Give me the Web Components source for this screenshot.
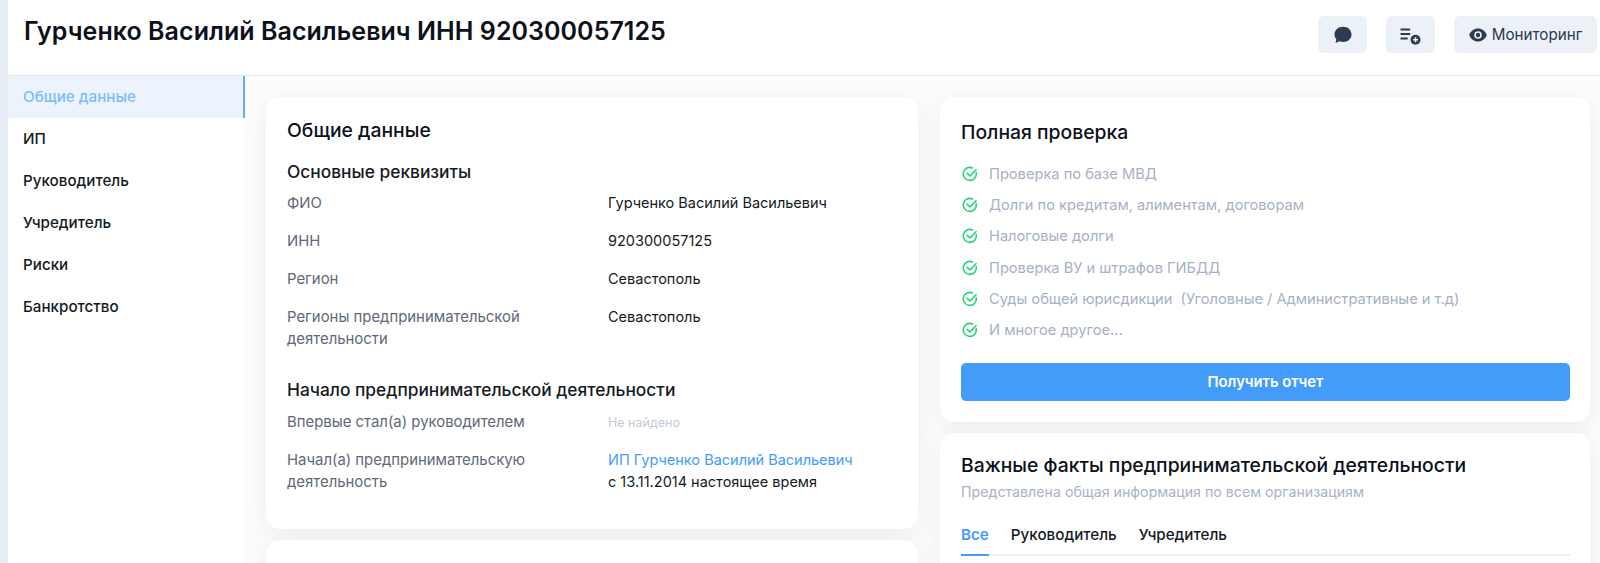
<!DOCTYPE html>
<html lang="ru">
<head>
<meta charset="utf-8">
<title>Гурченко Василий Васильевич</title>
<style>
  html, body { margin: 0; height: 100%; overflow: hidden; background: #e9eef6; }
  body { font-family: Inter, "Noto Sans", sans-serif; color: #0c111a; padding-left: 8px; box-sizing: border-box; }
</style>
</head>
<body>
<app-page>
  <page-header slot="header" title="Гурченко Василий Васильевич ИНН 920300057125"></page-header>
  <side-nav slot="nav">
    <nav-item active>Общие данные</nav-item>
    <nav-item>ИП</nav-item>
    <nav-item>Руководитель</nav-item>
    <nav-item>Учредитель</nav-item>
    <nav-item>Риски</nav-item>
    <nav-item>Банкротство</nav-item>
  </side-nav>

  <info-card slot="left" heading="Общие данные" style="height:432px;--h2-gap:17px">
    <info-section heading="Основные реквизиты">
      <info-row label="ФИО">Гурченко Василий Васильевич</info-row>
      <info-row label="ИНН">920300057125</info-row>
      <info-row label="Регион">Севастополь</info-row>
      <info-row label="Регионы предпринимательской деятельности">Севастополь</info-row>
    </info-section>
    <info-section heading="Начало предпринимательской деятельности" style="margin-top:28px;--h3-gap:9px;--row-gap:15px">
      <info-row label="Впервые стал(а) руководителем"><span style="color:#c3cad8;font-size:12.500px">Не найдено</span></info-row>
      <info-row label="Начал(а) предпринимательскую деятельность"><span style="color:#449cf9">ИП Гурченко Василий Васильевич</span><br>с 13.11.2014 настоящее время</info-row>
    </info-section>
  </info-card>
  <info-card slot="left" style="height:120px"></info-card>

  <info-card slot="right" heading="Полная проверка" style="height:325px" pad>
    <check-list>
      <check-item>Проверка по базе МВД</check-item>
      <check-item>Долги по кредитам, алиментам, договорам</check-item>
      <check-item>Налоговые долги</check-item>
      <check-item>Проверка ВУ и штрафов ГИБДД</check-item>
      <check-item>Суды общей юрисдикции&nbsp; (Уголовные / Административные и т.д)</check-item>
      <check-item>И многое другое...</check-item>
    </check-list>
    <primary-button>Получить отчет</primary-button>
  </info-card>
  <info-card slot="right" heading="Важные факты предпринимательской деятельности" style="height:200px;padding-top:19px;--h2-gap:4px" pad>
    <div style="color:#aab3c5;font-size:14.200px;line-height:20px">Представлена общая информация по всем организациям</div>
    <tab-bar>
      <tab-item active>Все</tab-item>
      <tab-item>Руководитель</tab-item>
      <tab-item>Учредитель</tab-item>
    </tab-bar>
  </info-card>
</app-page>

<script>
class AppPage extends HTMLElement {
  constructor() {
    super();
    this.attachShadow({ mode: 'open' }).innerHTML = `
      <style>
        :host { display: block; height: 563px; background: #fff; overflow: hidden; }
        .body { display: flex; height: 487px; }
        nav { width: 237px; flex: none; }
        main {
          flex: 1;
          min-width: 0;
          display: grid;
          grid-template-columns: 652px 650px;
          gap: 22px;
          padding: 21px 0 0 21px;
          background: #fcfcfd;
          align-content: start;
        }
        .col { display: flex; flex-direction: column; gap: 11px; }
      </style>
      <slot name="header"></slot>
      <div class="body">
        <nav><slot name="nav"></slot></nav>
        <main>
          <div class="col"><slot name="left"></slot></div>
          <div class="col"><slot name="right"></slot></div>
        </main>
      </div>
    `;
  }
}

class PageHeader extends HTMLElement {
  constructor() {
    super();
    this.attachShadow({ mode: 'open' }).innerHTML = `
      <style>
        :host {
          display: flex;
          justify-content: space-between;
          height: 75px;
          border-bottom: 1px solid #e3e5e9;
          background: #fff;
          padding: 0 3px 0 16px;
        }
        h1 { margin: 15px 0 0; font-size: 25px; line-height: 32px; font-weight: 600; letter-spacing: .05px; }
        .actions { display: flex; gap: 19px; padding-top: 16px; height: 37px; }
        button {
          display: flex;
          align-items: center;
          justify-content: center;
          gap: 5px;
          height: 37px;
          min-width: 49px;
          padding: 0;
          border: none;
          border-radius: 6px;
          background: #ecf0f7;
          color: #2c3a4d;
          font: 400 15.200px Inter, "Noto Sans", sans-serif;
        }
        button.wide { width: 143px; }
        svg { display: block; fill: #2d3b4e; }
      </style>
      <h1></h1>
      <div class="actions">
        <button aria-label="Чат">
          <svg width="20" height="20" viewBox="0 0 20 20"><path d="M10.200 1.800c-5 0-8.700 3.300-8.700 7.700 0 1.900.7 3.500 1.800 4.800l-.8 3.800 4-1.800c1.200.5 2.400.7 3.700.7 4.800 0 8.300-3.200 8.300-7.500s-3.500-7.700-8.300-7.700z"/></svg>
        </button>
        <button aria-label="Добавить в список">
          <svg width="22" height="20" viewBox="0 0 22 20"><path d="M.5 3.500h9.700v2H.5zM.5 8h9.700v2H.5zM.5 12.500h7.200v2H.5z"/><circle cx="15.500" cy="14.800" r="5"/><path d="M14.700 12.300h1.600V14H18v1.600h-1.700v1.700h-1.600v-1.700H13V14h1.700z" fill="#ecf0f7"/></svg>
        </button>
        <button class="wide">
          <svg width="18" height="14" viewBox="0 0 18 14"><path fill-rule="evenodd" d="M9 .5C5 .5 1.700 3 .2 7 1.700 11 5 13.500 9 13.500s7.300-2.500 8.800-6.500C16.300 3 13 .5 9 .5zM9 10.800a3.800 3.800 0 1 1 0-7.600 3.800 3.800 0 0 1 0 7.600z"/><circle cx="9" cy="7" r="2.200"/></svg>
          <span>Мониторинг</span>
        </button>
      </div>
    `;
  }
  connectedCallback() {
    this.shadowRoot.querySelector('h1').textContent = this.getAttribute('title');
    this.removeAttribute('title');
  }
}

class SideNav extends HTMLElement {
  constructor() {
    super();
    this.attachShadow({ mode: 'open' }).innerHTML = `
      <style>:host { display: block; }</style>
      <slot></slot>
    `;
  }
}

class NavItem extends HTMLElement {
  constructor() {
    super();
    this.attachShadow({ mode: 'open' }).innerHTML = `
      <style>
        :host {
          display: flex;
          align-items: center;
          height: 42px;
          padding: 0 0 2px 15px;
          box-sizing: border-box;
          font-size: 15.200px;
          font-weight: 500;
          color: #141a24;
        }
        :host([active]) {
          background: #ecf3fc;
          color: #7fbafb;
          border-right: 2px solid #6ca8f4;
        }
      </style>
      <slot></slot>
    `;
  }
}

class InfoCard extends HTMLElement {
  constructor() {
    super();
    this.attachShadow({ mode: 'open' }).innerHTML = `
      <style>
        :host {
          display: block;
          flex: none;
          box-sizing: border-box;
          background: #fff;
          border-radius: 14px;
          padding: 20px 21px;
          box-shadow: 0 6px 22px rgba(30, 45, 70, .07);
        }
        :host([pad]) { padding: 22px 20px 22px 21px; }
        h2 { margin: 0 0 var(--h2-gap, 8px); font-size: 19.350px; line-height: 26px; font-weight: 550; }
        h2:empty { display: none; }
      </style>
      <h2></h2>
      <slot></slot>
    `;
  }
  connectedCallback() {
    this.shadowRoot.querySelector('h2').textContent = this.getAttribute('heading') || '';
  }
}

class InfoSection extends HTMLElement {
  constructor() {
    super();
    this.attachShadow({ mode: 'open' }).innerHTML = `
      <style>
        :host { display: block; }
        h3 { margin: 0 0 var(--h3-gap, 8px); font-size: 17.350px; line-height: 24px; font-weight: 550; color: #141a24; }
        .rows { display: flex; flex-direction: column; gap: var(--row-gap, 16px); }
      </style>
      <h3></h3>
      <div class="rows"><slot></slot></div>
    `;
  }
  connectedCallback() {
    this.shadowRoot.querySelector('h3').textContent = this.getAttribute('heading');
  }
}

class InfoRow extends HTMLElement {
  constructor() {
    super();
    this.attachShadow({ mode: 'open' }).innerHTML = `
      <style>
        :host {
          display: grid;
          grid-template-columns: 321px 1fr;
          font-size: 14.900px;
          line-height: 22px;
        }
        .label { color: #5f6878; padding-right: 60px; }
        .value { color: #141a24; font-size: 14.500px; }
      </style>
      <div class="label"></div>
      <div class="value"><slot></slot></div>
    `;
  }
  connectedCallback() {
    this.shadowRoot.querySelector('.label').textContent = this.getAttribute('label');
  }
}

class CheckList extends HTMLElement {
  constructor() {
    super();
    this.attachShadow({ mode: 'open' }).innerHTML = `
      <style>:host { display: flex; flex-direction: column; gap: 9.200px; margin-top: 18px; }</style>
      <slot></slot>
    `;
  }
}

class CheckItem extends HTMLElement {
  constructor() {
    super();
    this.attachShadow({ mode: 'open' }).innerHTML = `
      <style>
        :host {
          display: flex;
          align-items: center;
          gap: 11px;
          height: 22px;
          font-size: 14.650px;
          color: #a7b1c4;
        }
        svg { flex: none; margin-left: 1px; fill: none; stroke: #22d37a; stroke-width: 1.6; stroke-linecap: round; stroke-linejoin: round; }
      </style>
      <svg width="16" height="16" viewBox="0 0 16 16"><path d="M14.200 6.800A6.500 6.500 0 1 1 10.500 2"/><path d="M5.200 7.300 8 10l6-6.300"/></svg>
      <span><slot></slot></span>
    `;
  }
}

class PrimaryButton extends HTMLElement {
  constructor() {
    super();
    this.attachShadow({ mode: 'open' }).innerHTML = `
      <style>
        :host {
          display: flex;
          align-items: center;
          justify-content: center;
          height: 38px;
          margin-top: 22px;
          border-radius: 5px;
          background: #449cf9;
          color: #fff;
          font-size: 14.800px;
          font-weight: 600;
        }
      </style>
      <slot></slot>
    `;
  }
}

class TabBar extends HTMLElement {
  constructor() {
    super();
    this.attachShadow({ mode: 'open' }).innerHTML = `
      <style>
        :host {
          display: flex;
          gap: 22px;
          margin-top: 17px;
          border-bottom: 2px solid #eef0f4;
        }
      </style>
      <slot></slot>
    `;
  }
}

class TabItem extends HTMLElement {
  constructor() {
    super();
    this.attachShadow({ mode: 'open' }).innerHTML = `
      <style>
        :host {
          display: block;
          height: 35px;
          line-height: 32px;
          margin-bottom: -2px;
          font-size: 15.200px;
          font-weight: 500;
          color: #141a24;
        }
        :host([active]) { color: #449cf9; border-bottom: 2px solid #449cf9; font-weight: 600; }
      </style>
      <slot></slot>
    `;
  }
}

customElements.define('app-page', AppPage);
customElements.define('page-header', PageHeader);
customElements.define('side-nav', SideNav);
customElements.define('nav-item', NavItem);
customElements.define('info-card', InfoCard);
customElements.define('info-section', InfoSection);
customElements.define('info-row', InfoRow);
customElements.define('check-list', CheckList);
customElements.define('check-item', CheckItem);
customElements.define('primary-button', PrimaryButton);
customElements.define('tab-bar', TabBar);
customElements.define('tab-item', TabItem);
</script>
</body>
</html>
